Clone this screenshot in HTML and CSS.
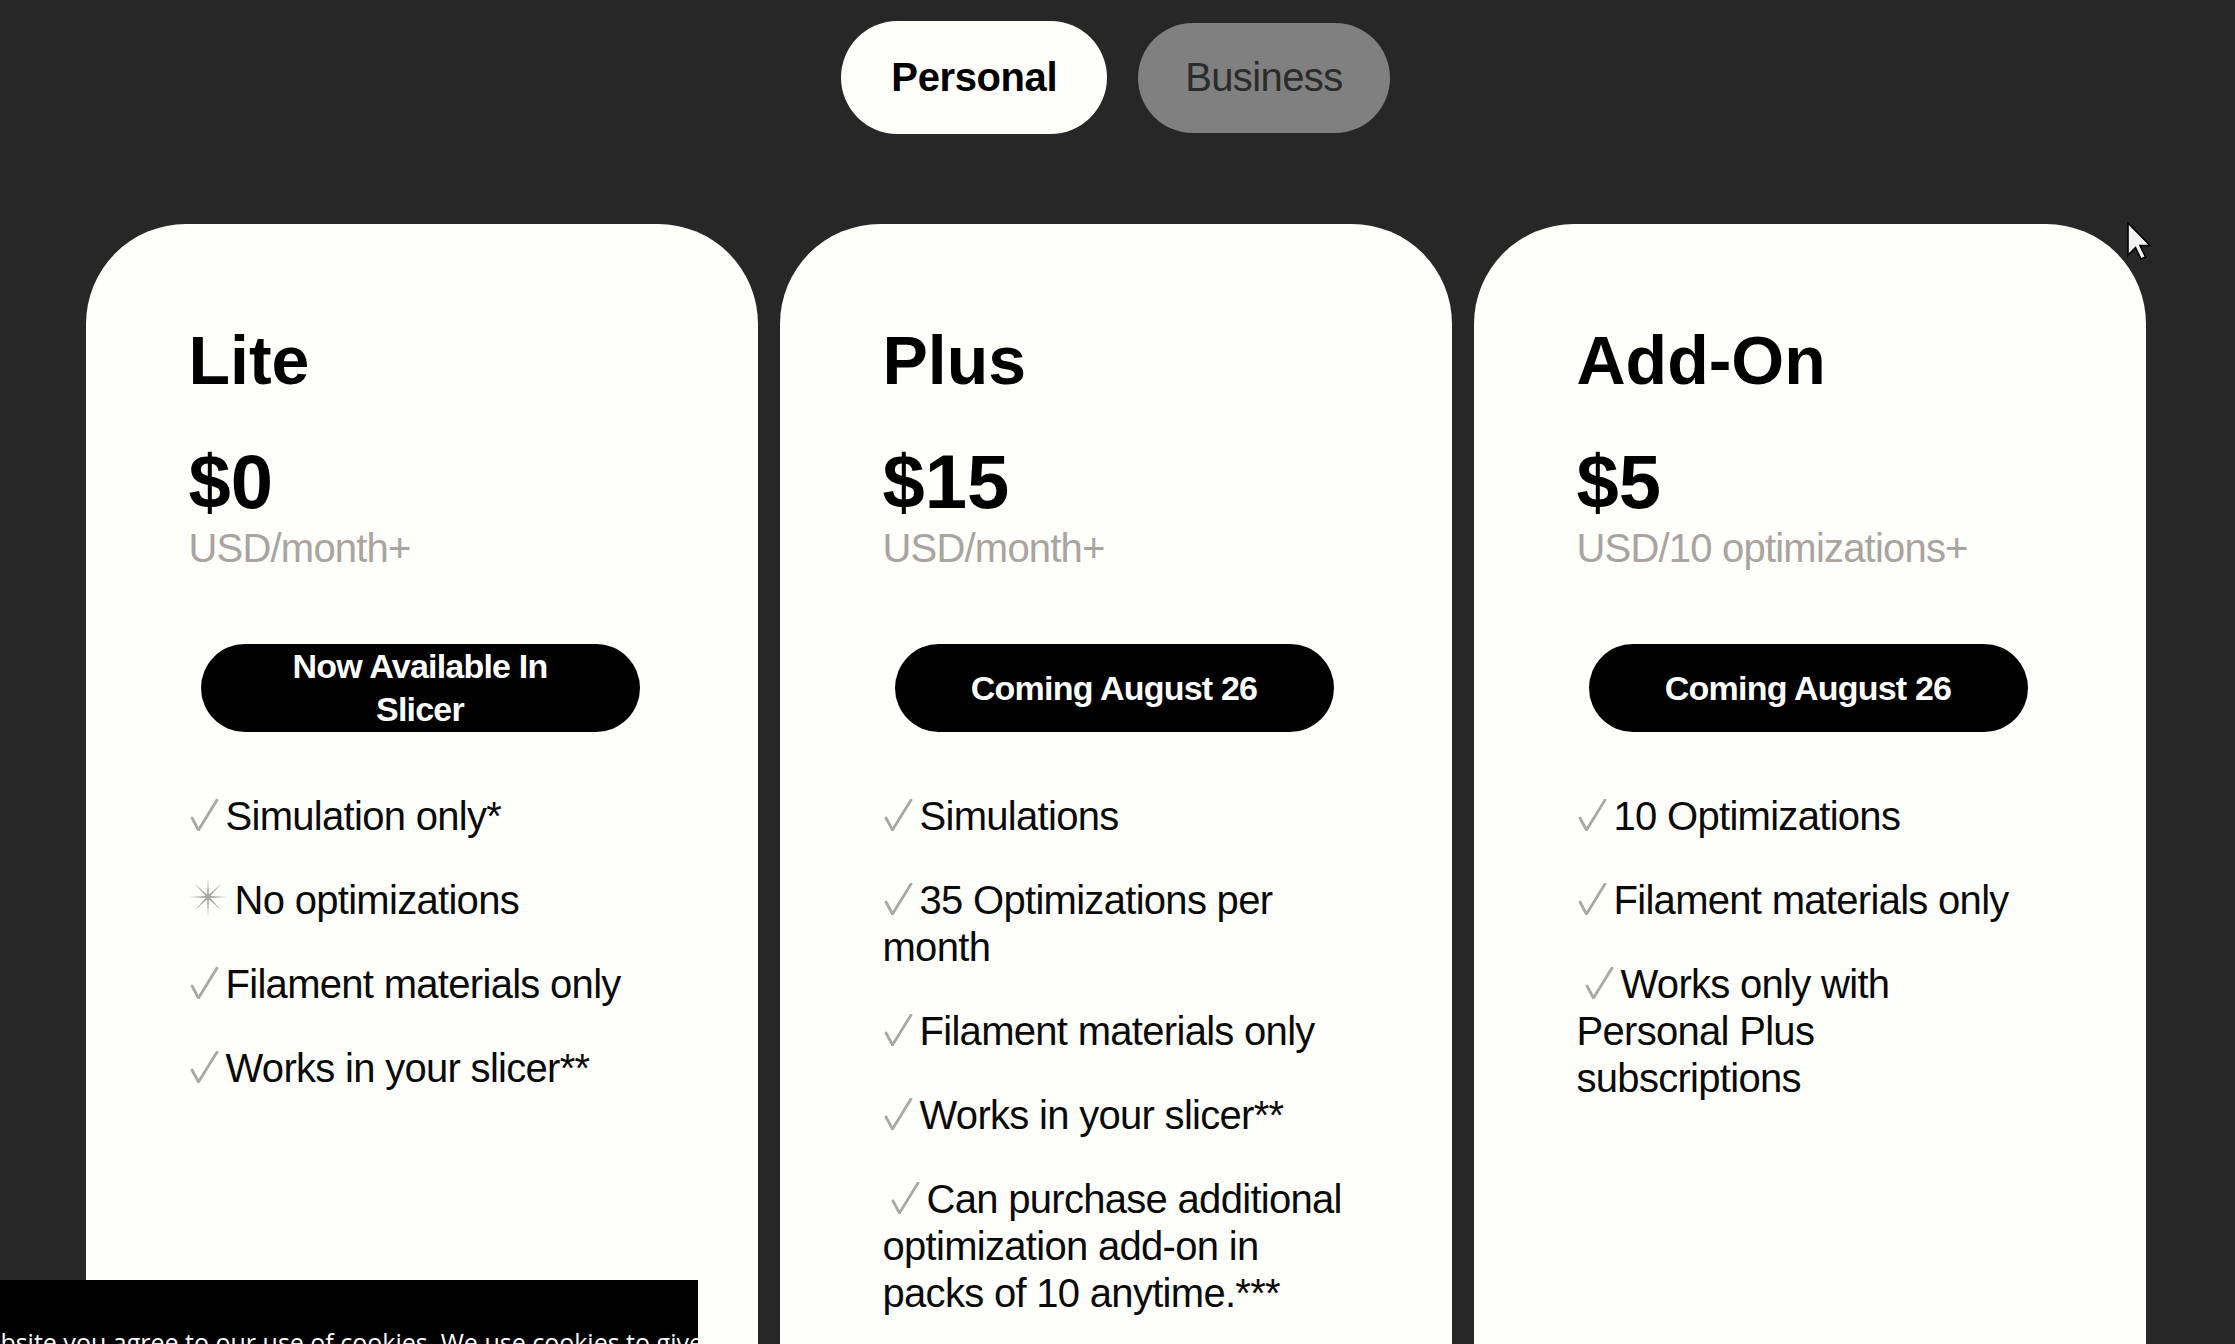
FILE: index.html
```html
<!DOCTYPE html>
<html lang="en">
<head>
<meta charset="utf-8">
<title>Pricing</title>
<link rel="stylesheet" href="styles.css">
</head>
<body>
<main class="page">
  <div class="toggle">
    <button class="pill pill-active">Personal</button>
    <button class="pill pill-muted">Business</button>
  </div>

  <div class="plans">
    <section class="card">
      <h2 class="plan-name">Lite</h2>
      <div class="price">$0</div>
      <div class="unit">USD/month+</div>
      <div class="cta">Now Available In Slicer</div>
      <ul class="features">
        <li><svg class="check" viewBox="0 0 30 32" width="30" height="32"><polyline points="3,19 9.5,31 28,1"/></svg>Simulation only*</li>
        <li><svg class="star" viewBox="0 0 36 36" width="38" height="38"><path d="M18 0 L18.96 15.69 L30.73 5.27 L20.31 17.04 L36 18 L20.31 18.96 L30.73 30.73 L18.96 20.31 L18 36 L17.04 20.31 L5.27 30.73 L15.69 18.96 L0 18 L15.69 17.04 L5.27 5.27 L17.04 15.69 Z"/></svg>No optimizations</li>
        <li><svg class="check" viewBox="0 0 30 32" width="30" height="32"><polyline points="3,19 9.5,31 28,1"/></svg>Filament materials only</li>
        <li><svg class="check" viewBox="0 0 30 32" width="30" height="32"><polyline points="3,19 9.5,31 28,1"/></svg>Works in your slicer**</li>
      </ul>
    </section>

    <section class="card">
      <h2 class="plan-name">Plus</h2>
      <div class="price">$15</div>
      <div class="unit">USD/month+</div>
      <div class="cta">Coming August 26</div>
      <ul class="features">
        <li><svg class="check" viewBox="0 0 30 32" width="30" height="32"><polyline points="3,19 9.5,31 28,1"/></svg>Simulations</li>
        <li><svg class="check" viewBox="0 0 30 32" width="30" height="32"><polyline points="3,19 9.5,31 28,1"/></svg>35 Optimizations per month</li>
        <li><svg class="check" viewBox="0 0 30 32" width="30" height="32"><polyline points="3,19 9.5,31 28,1"/></svg>Filament materials only</li>
        <li><svg class="check" viewBox="0 0 30 32" width="30" height="32"><polyline points="3,19 9.5,31 28,1"/></svg>Works in your slicer**</li>
        <li><svg class="check check-indent" viewBox="0 0 30 32" width="30" height="32"><polyline points="3,19 9.5,31 28,1"/></svg>Can purchase additional optimization add-on in packs of 10 anytime.***</li>
      </ul>
    </section>

    <section class="card">
      <h2 class="plan-name">Add-On</h2>
      <div class="price">$5</div>
      <div class="unit">USD/10 optimizations+</div>
      <div class="cta">Coming August 26</div>
      <ul class="features">
        <li><svg class="check" viewBox="0 0 30 32" width="30" height="32"><polyline points="3,19 9.5,31 28,1"/></svg>10 Optimizations</li>
        <li><svg class="check" viewBox="0 0 30 32" width="30" height="32"><polyline points="3,19 9.5,31 28,1"/></svg>Filament materials only</li>
        <li><svg class="check check-indent" viewBox="0 0 30 32" width="30" height="32"><polyline points="3,19 9.5,31 28,1"/></svg>Works only with Personal Plus subscriptions</li>
      </ul>
    </section>
  </div>
</main>

<div class="cookie">
  <p class="cookie-text">website you agree to our use of cookies. We use cookies to give you the best experience.</p>
</div>

<svg class="cursor" viewBox="0 0 24 38" width="24" height="38"><path d="M1 1 L1 33 L8.5 25.5 L14 37 L18.5 35 L13 23.5 L23 23.5 Z"/></svg>
</body>
</html>
```

FILE: styles.css
```css
html, body {
  margin: 0;
  padding: 0;
  overflow: hidden;
  background: #272727;
}

body {
  font-family: "Liberation Sans", Arial, sans-serif;
  color: #000;
}

.page {
  padding-top: 21px;
}

.toggle {
  display: flex;
  justify-content: center;
  align-items: center;
  gap: 31px;
  margin-left: -4px;
}

.pill {
  border: none;
  font-family: "Liberation Sans", Arial, sans-serif;
  font-size: 40px;
  display: flex;
  align-items: center;
  justify-content: center;
  cursor: pointer;
}

.pill-active {
  background: #fefefb;
  color: #000;
  font-weight: 700;
  letter-spacing: -0.4px;
  height: 113px;
  padding: 0 50px;
  border-radius: 57px;
}

.pill-muted {
  background: #808080;
  color: #2b2b2b;
  font-weight: 400;
  letter-spacing: -0.6px;
  height: 110px;
  padding: 0 47px;
  border-radius: 55px;
}

.plans {
  display: grid;
  grid-template-columns: repeat(3, 672px);
  justify-content: center;
  gap: 22px;
  margin-top: 90px;
  margin-left: -4px;
}

.card {
  background: #fefefb;
  border-radius: 100px 100px 0 0;
  padding: 102px 104px 240px 103px;
  min-height: 1000px;
  display: flex;
  flex-direction: column;
  align-items: flex-start;
}

.plan-name {
  margin: 0;
  font-size: 68px;
  line-height: 68px;
  font-weight: 700;
}

.price {
  margin-top: 50px;
  font-size: 76px;
  line-height: 76px;
  font-weight: 700;
  letter-spacing: 0;
}

.unit {
  margin-top: 5px;
  font-size: 40px;
  line-height: 46px;
  color: #a9a49f;
  letter-spacing: -0.8px;
}

.cta {
  margin-top: 73px;
  margin-left: 12px;
  box-sizing: border-box;
  width: 439px;
  height: 88px;
  padding: 0 58px;
  background: #000;
  color: #fff;
  border-radius: 44px;
  display: flex;
  align-items: center;
  justify-content: center;
  text-align: center;
  font-size: 34px;
  line-height: 43px;
  font-weight: 700;
  letter-spacing: -0.8px;
}

.features {
  list-style: none;
  margin: 61px 0 0;
  padding: 0;
  width: 100%;
}

.features li {
  font-size: 40px;
  line-height: 47px;
  letter-spacing: -0.7px;
  color: #0a0a0a;
  margin-bottom: 37px;
}

.check {
  vertical-align: -1px;
  margin-right: 7px;
  fill: none;
  stroke: #a8a8a8;
  stroke-width: 2.8;
  stroke-linecap: round;
  stroke-linejoin: round;
}

.check-indent {
  margin-left: 7px;
}

.star {
  vertical-align: -2px;
  margin-right: 8px;
  fill: #a8a8a8;
}

.cookie {
  position: fixed;
  left: 0;
  bottom: 0;
  width: 698px;
  height: 64px;
  background: #000;
  overflow: hidden;
  z-index: 10;
}

.cookie-text {
  margin: 44px 0 0 -33px;
  white-space: nowrap;
  font-family: "Open Sans", "DejaVu Sans", sans-serif;
  font-size: 25px;
  line-height: 37px;
  color: #fff;
}

.cursor {
  position: fixed;
  left: 2127px;
  top: 222px;
  fill: #f2f2f2;
  stroke: #000;
  stroke-width: 1.6;
  stroke-linejoin: miter;
  z-index: 20;
}
```
